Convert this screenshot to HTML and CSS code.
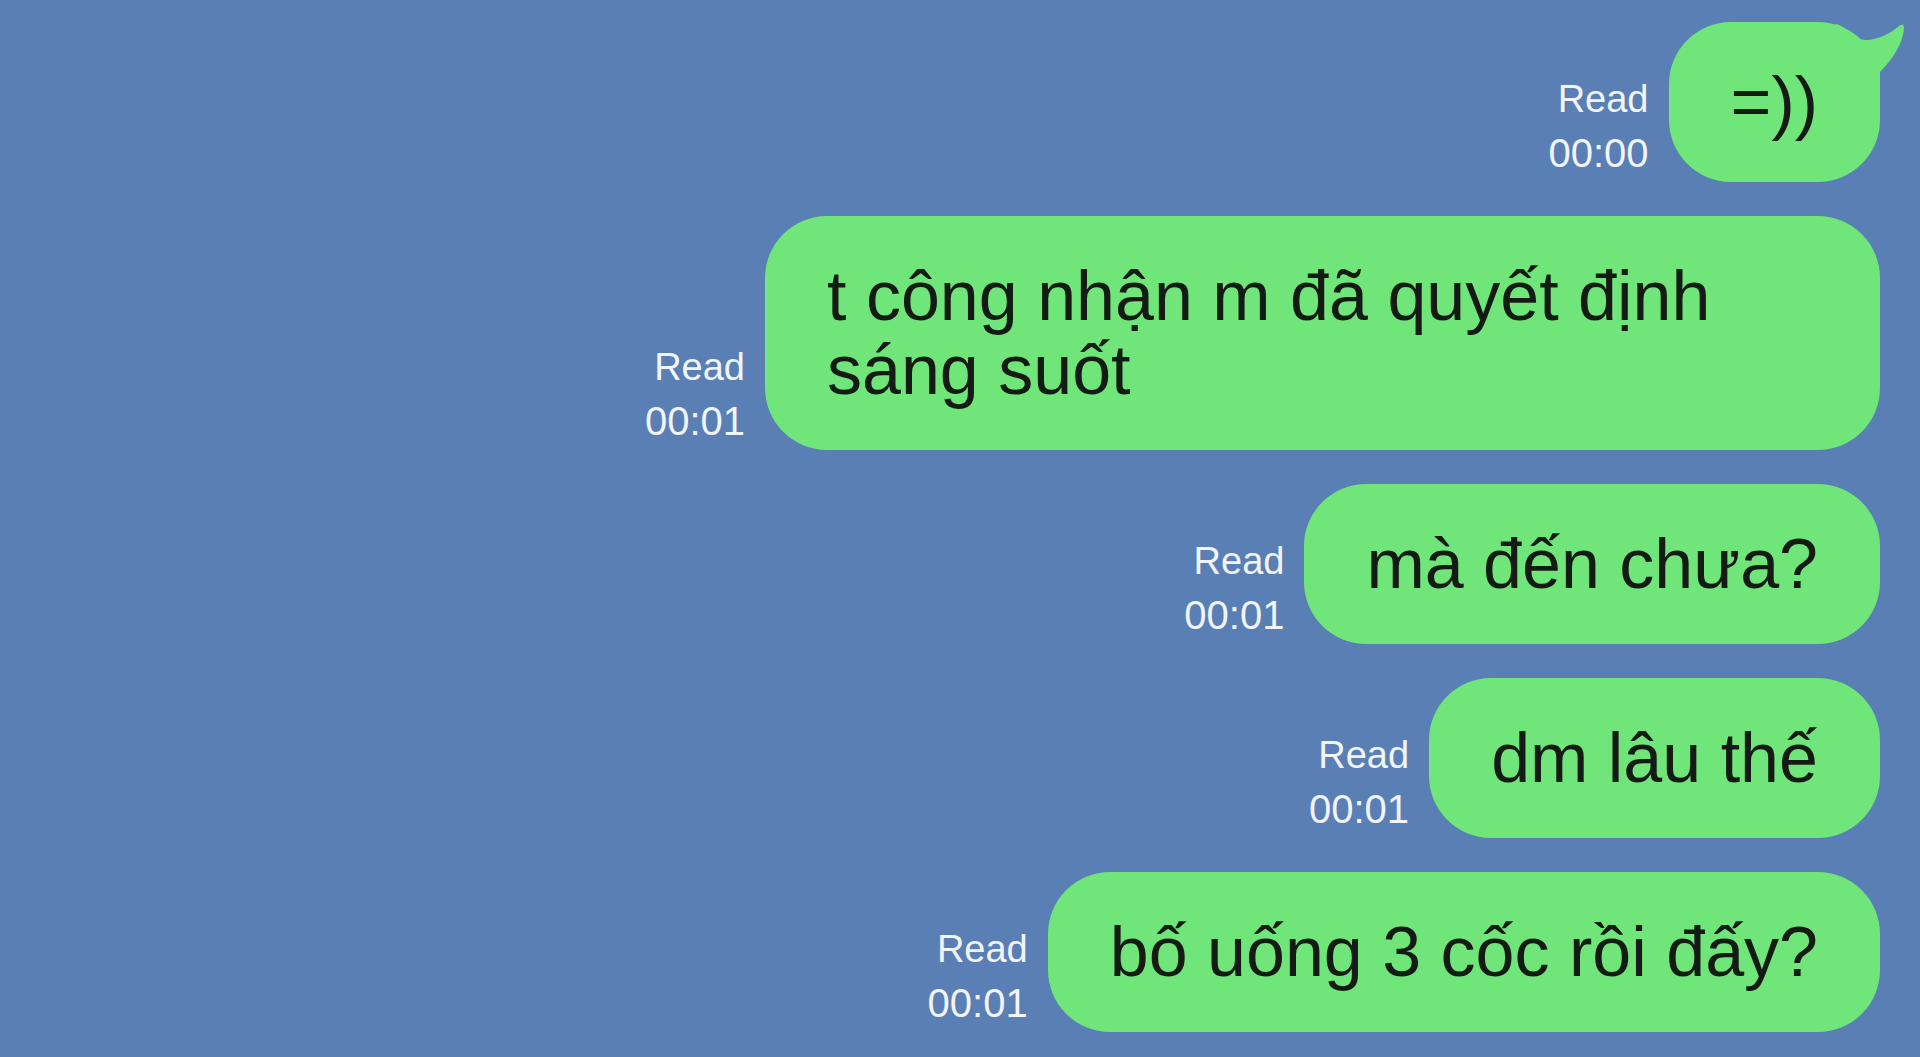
FILE: index.html
```html
<!DOCTYPE html>
<html lang="vi">
<head>
  <meta charset="UTF-8">
  <title>Chat</title>
<link rel="stylesheet" href="styles.css">
</head>
<body>
  <div class="chat">
    <div class="row">
      <div class="meta"><span>Read</span><span class="time">00:00</span></div>
      <div class="bubble first">
        =))
        <svg class="tail" width="70" height="72" viewBox="0 0 70 72">
          <path d="M0 2 C10 4 18 18 30 18 C42 18 55 11 63 4 Q68 0 68 6 C67 22 56 38 44 50 L44 72 L0 72 Z" />
        </svg>
      </div>
    </div>

    <div class="row">
      <div class="meta"><span>Read</span><span class="time">00:01</span></div>
      <div class="bubble">t công nhận m đã quyết định sáng suốt</div>
    </div>

    <div class="row">
      <div class="meta"><span>Read</span><span class="time">00:01</span></div>
      <div class="bubble">mà đến chưa?</div>
    </div>

    <div class="row">
      <div class="meta"><span>Read</span><span class="time">00:01</span></div>
      <div class="bubble">dm lâu thế</div>
    </div>

    <div class="row">
      <div class="meta"><span>Read</span><span class="time">00:01</span></div>
      <div class="bubble">bố uống 3 cốc rồi đấy?</div>
    </div>
  </div>
</body>
</html>
```

FILE: styles.css
```css
html, body {
  margin: 0;
  padding: 0;
  height: 100%;
  background: #5a7fb4;
  font-family: 'Liberation Sans', Arial, sans-serif;
  overflow: hidden;
}

.chat {
  display: flex;
  flex-direction: column;
  align-items: flex-end;
  gap: 34px;
  padding: 22px 40px 0 0;
}

.row {
  display: flex;
  align-items: flex-end;
  justify-content: flex-end;
  gap: 20px;
}

/* read + time next to the bubble */
.meta {
  display: flex;
  flex-direction: column;
  align-items: flex-end;
  padding-bottom: 2px;
  font-size: 38px;
  line-height: 54px;
  color: #f1f4f9;
  white-space: nowrap;
}

.meta .time {
  font-size: 40px;
}

.bubble {
  position: relative;
  box-sizing: border-box;
  max-width: 1115px;
  padding: 43px 62px;
  border-radius: 62px;
  background: #70e57a;
  color: #141a14;
  font-size: 70px;
  line-height: 74px;
}

.tail {
  position: absolute;
  top: 0;
  right: -26px;
  fill: #70e57a;
  overflow: visible;
}
```
